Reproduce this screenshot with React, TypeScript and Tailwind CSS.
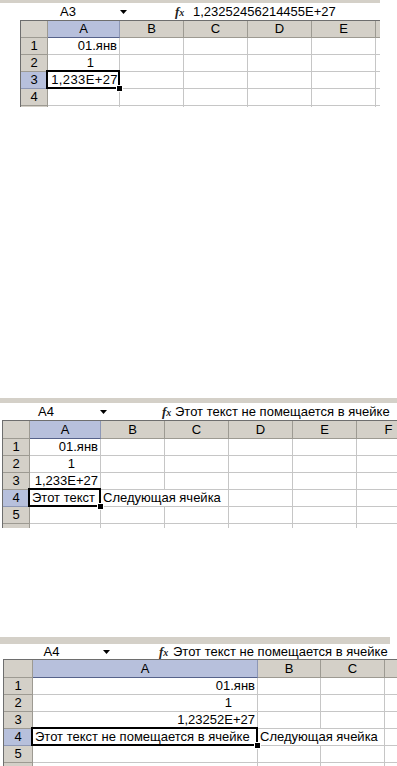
import React from "react";

type CellDef = { t?: string; c?: string; clip?: boolean; over?: boolean };
type Col = { l: string; w: number };

const HDR_BORDER = "border-[#9d9a92]";

function Grid({
  width,
  height,
  rh,
  cols,
  headerCls,
  rows,
  labeled,
  activeRow,
  activeCol,
}: {
  width: number;
  height: number;
  rh: number;
  cols: Col[];
  headerCls: string;
  rows: CellDef[][];
  labeled: number;
  activeRow: number;
  activeCol: number;
}) {
  return (
    <div
      className="relative overflow-hidden border-t border-l border-[#6e6e6e] bg-white"
      style={{ width, height }}
    >
      <div className={`flex ${headerCls}`}>
        <div
          className={`h-full shrink-0 bg-[#d4d0c8] border-r border-b ${HDR_BORDER}`}
          style={{ width: rh }}
        />
        {cols.map((c, i) => (
          <div
            key={i}
            className={`h-full shrink-0 flex items-center justify-center border-r border-b ${
              i === activeCol
                ? "bg-[#b7c0dc] border-b-[#56628a] border-r-[#8d97b5]"
                : `bg-[#d4d0c8] ${HDR_BORDER}`
            }`}
            style={{ width: c.w }}
          >
            {c.l}
          </div>
        ))}
      </div>
      {rows.map((r, ri) => (
        <div key={ri} className="flex h-[17px]">
          <div
            className={`h-full shrink-0 flex items-center justify-center border-r border-b ${
              ri === activeRow
                ? "bg-[#b7c0dc] border-r-[#56628a] border-b-[#8d97b5]"
                : `bg-[#d4d0c8] ${HDR_BORDER}`
            }`}
            style={{ width: rh }}
          >
            {ri < labeled ? ri + 1 : ""}
          </div>
          {cols.map((c, ci) => {
            const cell = r[ci] || {};
            const isActive = ri === activeRow && ci === activeCol;
            return (
              <div
                key={ci}
                className={`relative h-full shrink-0 border-b border-[#c6c6c6] ${
                  cell.over ? "" : "border-r"
                }`}
                style={{ width: c.w }}
              >
                {cell.t !== undefined && (
                  <div
                    className={`relative z-10 flex h-full items-center whitespace-nowrap ${
                      cell.clip ? "overflow-hidden" : ""
                    } ${cell.c || "justify-start pl-[2px]"}`}
                  >
                    {cell.t}
                  </div>
                )}
                {isActive && (
                  <div className="absolute z-20 left-[-2px] top-[-2px] right-[-1px] bottom-[-1px] border-2 border-black">
                    <div className="absolute right-[-5px] bottom-[-5px] h-[7px] w-[7px] bg-black border border-white" />
                  </div>
                )}
              </div>
            );
          })}
        </div>
      ))}
    </div>
  );
}

function Arrow() {
  return (
    <svg width="7" height="4" viewBox="0 0 7 4" className="block">
      <path d="M0 0 L7 0 L3.5 4 Z" fill="#000" />
    </svg>
  );
}

function Fx() {
  return (
    <span className="font-['Liberation_Serif'] italic font-bold text-[13px] leading-none text-[#222]">
      f<span className="text-[10px]">x</span>
    </span>
  );
}

const R = "justify-end pr-[2px]";
const R1 = "justify-end pr-[25px]";
const LONG = "Этот текст не помещается в ячейке";
const NEXT = "Следующая ячейка";

export default function App() {
  return (
    <div className="w-[397px] h-[766px] overflow-hidden bg-white text-black text-[13px] leading-[16px] font-['Liberation_Sans',Arial,sans-serif]">
      {/* Screenshot 1 */}
      <div className="h-[398px]">
        <div className="h-[3px] w-[380px] bg-[#d4d0c8]" />
        <div className="flex h-[17px] w-[380px] items-center bg-white">
          <div className="flex w-[116px] justify-center pl-[20px]">A3</div>
          <div className="ml-[4px]">
            <Arrow />
          </div>
          <div className="ml-[48px] flex w-[18px] items-center">
            <Fx />
          </div>
          <div>1,23252456214455E+27</div>
        </div>
        <div className="pl-[20px]">
          <Grid
            width={360}
            height={87}
            rh={27}
            headerCls="h-[17px]"
            labeled={4}
            cols={[
              { l: "A", w: 72 },
              { l: "B", w: 64 },
              { l: "C", w: 64 },
              { l: "D", w: 64 },
              { l: "E", w: 64 },
              { l: "", w: 64 },
            ]}
            activeRow={2}
            activeCol={0}
            rows={[
              [{ t: "01.янв", c: R }],
              [{ t: "1", c: R1 }],
              [{ t: "1,233E+27", c: "justify-end pr-[1px] tracking-[0.4px]" }],
              [],
              [],
            ]}
          />
        </div>
      </div>

      {/* Screenshot 2 */}
      <div className="h-[239px]">
        <div className="h-[5px] w-full bg-[#d4d0c8]" />
        <div className="flex h-[17px] w-full items-center bg-white">
          <div className="flex w-[92px] justify-center">A4</div>
          <div className="ml-[8px]">
            <Arrow />
          </div>
          <div className="ml-[55px] flex w-[13px] items-center">
            <Fx />
          </div>
          <div>{LONG}</div>
        </div>
        <div className="pl-[2px]">
          <Grid
            width={395}
            height={108}
            rh={27}
            headerCls="h-[18px]"
            labeled={5}
            cols={[
              { l: "A", w: 71 },
              { l: "B", w: 64 },
              { l: "C", w: 64 },
              { l: "D", w: 64 },
              { l: "E", w: 64 },
              { l: "F", w: 64 },
            ]}
            activeRow={3}
            activeCol={0}
            rows={[
              [{ t: "01.янв", c: R }],
              [{ t: "1", c: R1 }],
              [{ t: "1,233E+27", c: R }],
              [
                { t: LONG, clip: true, c: "justify-start pl-[2px]" },
                { t: NEXT, over: true, c: "justify-start pl-[2px]" },
              ],
              [],
              [],
            ]}
          />
        </div>
      </div>

      {/* Screenshot 3 */}
      <div>
        <div className="h-[7px] w-[390px] bg-[#d4d0c8]" />
        <div className="flex h-[15px] w-full items-center bg-white">
          <div className="flex w-[103px] justify-center">A4</div>
          <div>
            <Arrow />
          </div>
          <div className="ml-[49px] flex w-[14px] items-center">
            <Fx />
          </div>
          <div>{LONG}</div>
        </div>
        <div className="pl-[3px]">
          <Grid
            width={394}
            height={107}
            rh={29}
            headerCls="h-[18px]"
            labeled={5}
            cols={[
              { l: "A", w: 225 },
              { l: "B", w: 63 },
              { l: "C", w: 64 },
              { l: "D", w: 64 },
            ]}
            activeRow={3}
            activeCol={0}
            rows={[
              [{ t: "01.янв", c: R }],
              [{ t: "1", c: R1 }],
              [{ t: "1,23252E+27", c: R }],
              [
                { t: LONG, c: "justify-start pl-[2px]" },
                { t: NEXT, over: true, c: "justify-start pl-[2px]" },
              ],
              [],
              [],
            ]}
          />
        </div>
      </div>
    </div>
  );
}
